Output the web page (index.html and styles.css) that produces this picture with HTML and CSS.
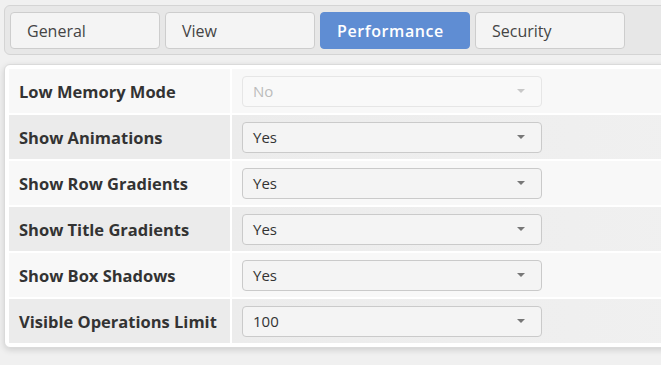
FILE: index.html
```html
<!DOCTYPE html>
<html>
<head>
<meta charset="utf-8">
<link rel="stylesheet" href="styles.css">
</head>
<body>
<div class="tabbar">
  <div class="tab">General</div>
  <div class="tab">View</div>
  <div class="tab active">Performance</div>
  <div class="tab">Security</div>
</div>
<div class="panel">
  <div class="row odd">
    <div class="label">Low Memory Mode</div>
    <div class="value"><div class="select disabled"><span>No</span><i class="arrow"></i></div></div>
  </div>
  <div class="row even">
    <div class="label">Show Animations</div>
    <div class="value"><div class="select"><span>Yes</span><i class="arrow"></i></div></div>
  </div>
  <div class="row odd">
    <div class="label">Show Row Gradients</div>
    <div class="value"><div class="select"><span>Yes</span><i class="arrow"></i></div></div>
  </div>
  <div class="row even">
    <div class="label">Show Title Gradients</div>
    <div class="value"><div class="select"><span>Yes</span><i class="arrow"></i></div></div>
  </div>
  <div class="row odd">
    <div class="label">Show Box Shadows</div>
    <div class="value"><div class="select"><span>Yes</span><i class="arrow"></i></div></div>
  </div>
  <div class="row even">
    <div class="label">Visible Operations Limit</div>
    <div class="value"><div class="select"><span>100</span><i class="arrow"></i></div></div>
  </div>
</div>
</body>
</html>
```
FILE: styles.css
```css
html, body {
  margin: 0;
  padding: 0;
  background: #f0f0f0;
  font-family: "Open Sans", "Liberation Sans", sans-serif;
  overflow: hidden;
}
body {
  width: 661px;
  height: 365px;
}
.tabbar {
  margin: 5px -30px 0 4px;
  padding: 6px 5px 5px 5px;
  border: 1px solid #d4d4d4;
  border-radius: 6px;
  background: #e7e7e7;
  display: flex;
  gap: 5px;
}
.tab {
  width: 150px;
  height: 37px;
  box-sizing: border-box;
  border: 1px solid #cdcdcd;
  border-radius: 4px;
  background: #f4f4f4;
  color: #444;
  font-size: 16px;
  padding-left: 16px;
  display: flex;
  align-items: center;
}
.tab.active {
  background: #5f8dd3;
  border-color: #5f8dd3;
  color: #fff;
  font-weight: 600;
  letter-spacing: 0.6px;
}
.panel {
  margin: 9px -30px 0 4px;
  padding: 4px 4px 4px 4px;
  border: 1px solid #dadada;
  border-radius: 6px;
  background: #fff;
  box-shadow: 0 2px 6px rgba(0, 0, 0, 0.14);
  display: flex;
  flex-direction: column;
  gap: 2px;
}
.row {
  display: grid;
  grid-template-columns: 221px 1fr;
  gap: 2px;
  height: 44px;
}
.row.odd > div {
  background: #f8f8f8;
}
.row.even > div {
  background: linear-gradient(to right, #ececec, #f0f0f0);
}
.row.even > .label {
  background: #ebebeb;
}
.label {
  display: flex;
  align-items: center;
  padding-left: 10px;
  font-weight: 700;
  font-size: 16.5px;
  color: #333;
}
.value {
  display: flex;
  align-items: center;
  padding-left: 10px;
}
.select {
  width: 300px;
  height: 31px;
  box-sizing: border-box;
  border: 1px solid #cacaca;
  border-radius: 4px;
  background: #f4f4f4;
  display: flex;
  align-items: center;
  justify-content: space-between;
  padding: 0 16px 0 10px;
  font-size: 15px;
  color: #333;
}
.select.disabled {
  background: #f9f9f9;
  border-color: #e6e6e6;
  color: #bcbcbc;
}
.arrow {
  width: 0;
  height: 0;
  border-left: 4px solid transparent;
  border-right: 4px solid transparent;
  border-top: 4px solid #777;
}
.select.disabled .arrow {
  border-top-color: #c8c8c8;
}
```
